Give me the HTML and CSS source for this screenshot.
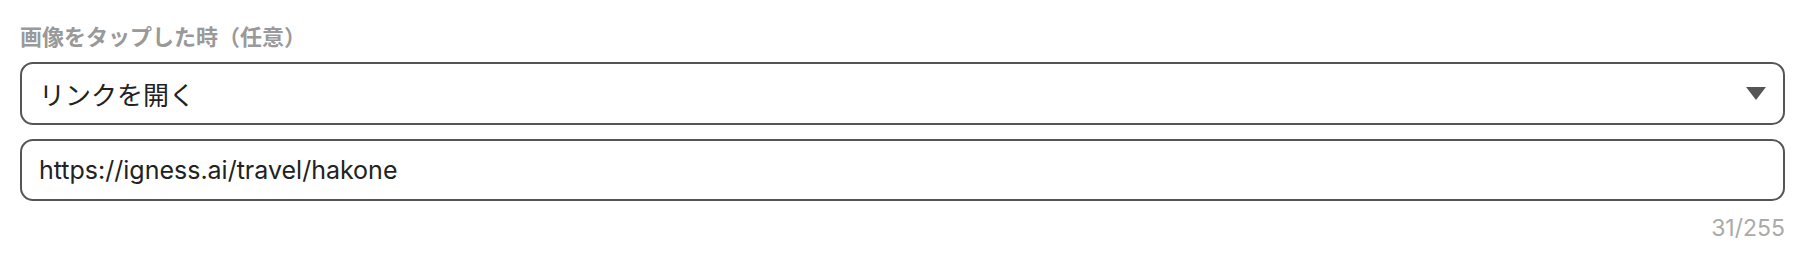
FILE: index.html
```html
<!DOCTYPE html>
<html lang="ja">
<head>
<meta charset="utf-8">
<link rel="stylesheet" href="styles.css">
</head>
<body>
<div class="field">
  <div class="label">画像をタップした時（任意）</div>
  <div class="select">
    <span class="select-text">リンクを開く</span>
    <svg class="caret" width="20" height="13" viewBox="0 0 20 13"><polygon points="0,0 20,0 10,13" fill="#555"/></svg>
  </div>
  <div class="input">
    <span class="input-text">https://igness.ai/travel/hakone</span>
  </div>
  <div class="counter">31/255</div>
</div>
</body>
</html>
```
FILE: styles.css
```css
html, body {
  margin: 0;
  padding: 0;
  background: #fff;
}
body {
  font-family: Inter, "Noto Sans CJK JP", sans-serif;
  color: #222;
}
.field {
  padding: 22px 21px 0 20px;
  display: flex;
  flex-direction: column;
}
.label {
  font-size: 22px;
  font-weight: 700;
  color: #999;
  line-height: 30px;
  height: 30px;
}
.select, .input {
  box-sizing: border-box;
  height: 63px;
  border: 2px solid #555;
  border-radius: 13px;
  display: flex;
  align-items: center;
  padding: 0 17px 0 17px;
  font-size: 25px;
}
.select {
  margin-top: 10px;
  justify-content: space-between;
}
.input {
  margin-top: 14px;
  height: 62px;
}
.select-text {
  font-family: "Noto Sans CJK JP", sans-serif;
  font-size: 26px;
}
.caret {
  display: block;
}
.counter {
  align-self: flex-end;
  margin-top: 14px;
  font-size: 23px;
  color: #aaa;
  line-height: 26px;
}
```
